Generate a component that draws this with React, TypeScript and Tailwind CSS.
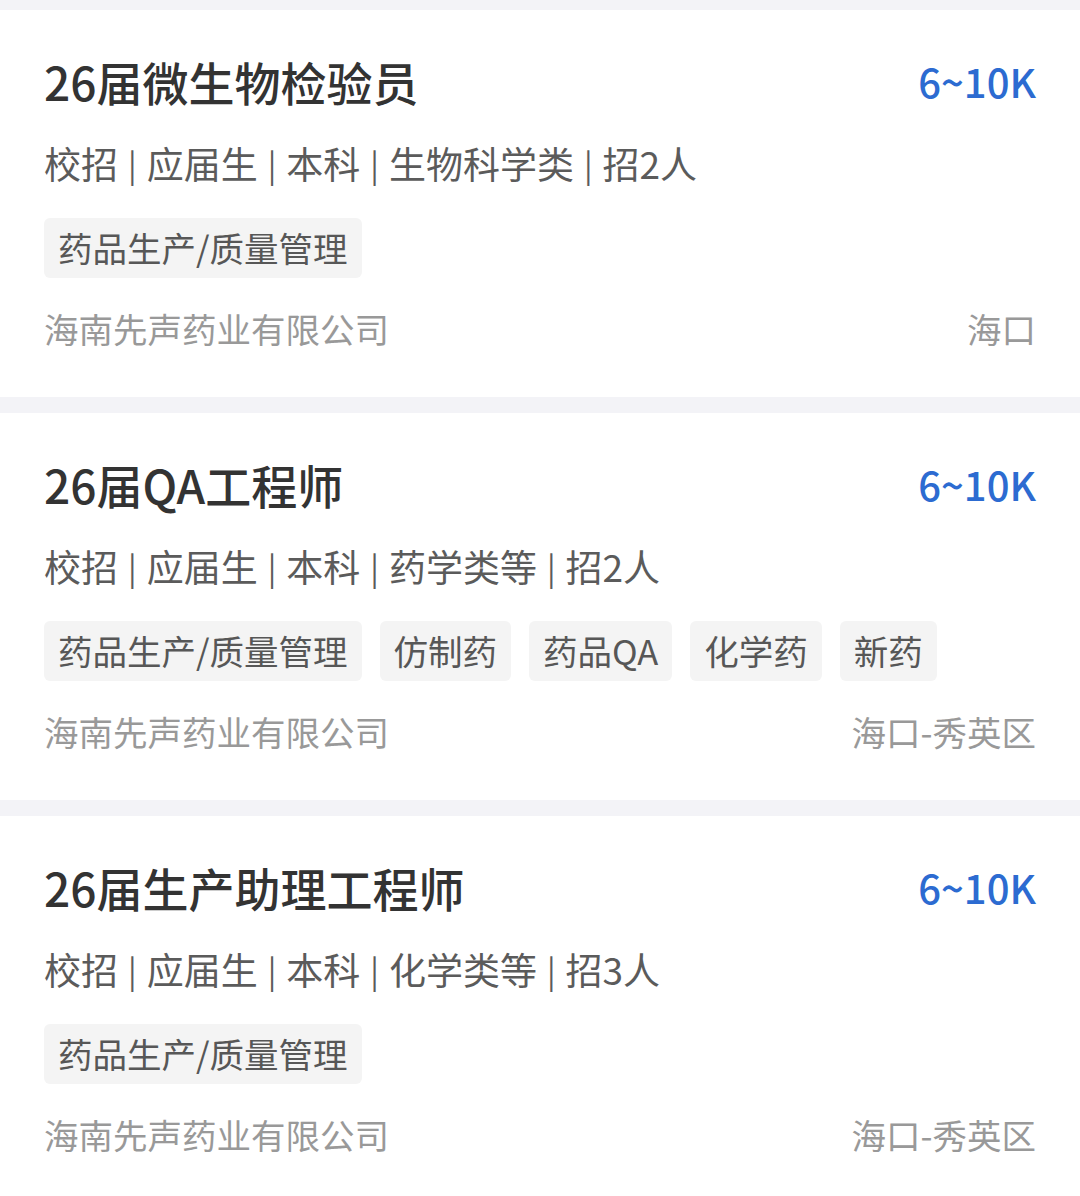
import React from "react";

type Job = {
  title: string;
  salary: string;
  meta: string[];
  tags: string[];
  company: string;
  location: string;
};

const jobs: Job[] = [
  {
    title: "26届微生物检验员",
    salary: "6~10K",
    meta: ["校招", "应届生", "本科", "生物科学类", "招2人"],
    tags: ["药品生产/质量管理"],
    company: "海南先声药业有限公司",
    location: "海口",
  },
  {
    title: "26届QA工程师",
    salary: "6~10K",
    meta: ["校招", "应届生", "本科", "药学类等", "招2人"],
    tags: ["药品生产/质量管理", "仿制药", "药品QA", "化学药", "新药"],
    company: "海南先声药业有限公司",
    location: "海口-秀英区",
  },
  {
    title: "26届生产助理工程师",
    salary: "6~10K",
    meta: ["校招", "应届生", "本科", "化学类等", "招3人"],
    tags: ["药品生产/质量管理"],
    company: "海南先声药业有限公司",
    location: "海口-秀英区",
  },
];

function Card({ job }: { job: Job }) {
  return (
    <div className="bg-white px-[44px] pt-[43px] pb-[47px]">
      <div className="flex items-center justify-between h-[56px]">
        <div className="text-[46px] leading-[56px] font-medium text-[#333333]">{job.title}</div>
        <div className="text-[40px] leading-[56px] font-medium text-[#2c6bd1]">{job.salary}</div>
      </div>
      <div className="mt-[30px] h-[48px] flex items-center text-[37px] leading-[48px] text-[#5b5b5b] whitespace-nowrap">
        {job.meta.map((m, i) => (
          <React.Fragment key={i}>
            {i > 0 && <span className="mx-[10px] text-[32px]">|</span>}
            <span>{m}</span>
          </React.Fragment>
        ))}
      </div>
      <div className="mt-[31px] flex gap-[18px]">
        {job.tags.map((t) => (
          <div
            key={t}
            className="h-[60px] px-[14px] flex items-center rounded-[6px] bg-[#f4f4f4] text-[34.5px] text-[#575757] whitespace-nowrap"
          >
            {t}
          </div>
        ))}
      </div>
      <div className="mt-[28px] flex items-center justify-between h-[44px] text-[34.5px] leading-[44px] text-[#999999]">
        <span>{job.company}</span>
        <span>{job.location}</span>
      </div>
    </div>
  );
}

export default function App() {
  return (
    <div
      className="w-[1080px] h-[1196px] overflow-hidden bg-[#f3f3f7] pt-[10px] flex flex-col gap-[16px]"
      style={{ fontFamily: '"Noto Sans CJK SC", "Noto Sans", sans-serif' }}
    >
      {jobs.map((j, i) => (
        <Card key={i} job={j} />
      ))}
    </div>
  );
}
